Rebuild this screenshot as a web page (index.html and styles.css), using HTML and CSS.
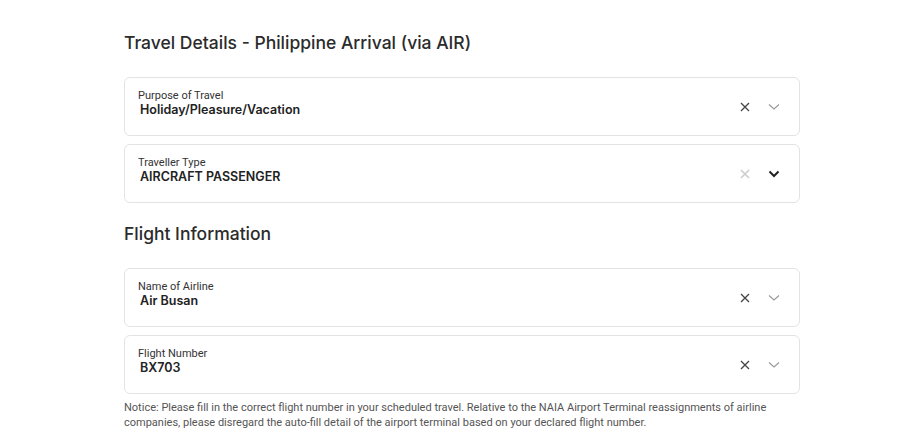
FILE: index.html
```html
<!DOCTYPE html>
<html lang="en">

<head>
    <meta charset="UTF-8">
    <meta name="viewport" content="width=device-width, initial-scale=1.0">
    <title>Travel Details</title>
    <link rel="stylesheet" href="styles.css">
</head>

<body>
    <div class="page">
        <h2 class="section-title">Travel Details - Philippine Arrival (via AIR)</h2>

        <div class="field">
            <div class="field-text">
                <div class="field-label">Purpose of Travel</div>
                <div class="field-value">Holiday/Pleasure/Vacation</div>
            </div>
            <div class="field-icons">
                <svg class="icon-clear" width="12" height="12" viewBox="0 0 12 12"><path d="M2 2 L10 10 M10 2 L2 10" stroke="#444" stroke-width="1.3" fill="none"/></svg>
                <svg class="icon-chevron" width="12" height="8" viewBox="0 0 12 8"><path d="M1 1.5 L6 6 L11 1.5" stroke="#999" stroke-width="1.1" fill="none"/></svg>
            </div>
        </div>

        <div class="field">
            <div class="field-text">
                <div class="field-label">Traveller Type</div>
                <div class="field-value">AIRCRAFT PASSENGER</div>
            </div>
            <div class="field-icons">
                <svg class="icon-clear" width="12" height="12" viewBox="0 0 12 12"><path d="M2 2 L10 10 M10 2 L2 10" stroke="#ccc" stroke-width="1.6" fill="none"/></svg>
                <svg class="icon-chevron" width="12" height="8" viewBox="0 0 12 8"><path d="M1.5 1.5 L6 6 L10.5 1.5" stroke="#222" stroke-width="2" fill="none"/></svg>
            </div>
        </div>

        <h2 class="section-title second">Flight Information</h2>

        <div class="field">
            <div class="field-text">
                <div class="field-label">Name of Airline</div>
                <div class="field-value">Air Busan</div>
            </div>
            <div class="field-icons">
                <svg class="icon-clear" width="12" height="12" viewBox="0 0 12 12"><path d="M2 2 L10 10 M10 2 L2 10" stroke="#444" stroke-width="1.3" fill="none"/></svg>
                <svg class="icon-chevron" width="12" height="8" viewBox="0 0 12 8"><path d="M1 1.5 L6 6 L11 1.5" stroke="#999" stroke-width="1.1" fill="none"/></svg>
            </div>
        </div>

        <div class="field">
            <div class="field-text">
                <div class="field-label">Flight Number</div>
                <div class="field-value">BX703</div>
            </div>
            <div class="field-icons">
                <svg class="icon-clear" width="12" height="12" viewBox="0 0 12 12"><path d="M2 2 L10 10 M10 2 L2 10" stroke="#444" stroke-width="1.3" fill="none"/></svg>
                <svg class="icon-chevron" width="12" height="8" viewBox="0 0 12 8"><path d="M1 1.5 L6 6 L11 1.5" stroke="#999" stroke-width="1.1" fill="none"/></svg>
            </div>
        </div>

        <p class="notice">Notice: Please fill in the correct flight number in your scheduled travel. Relative to the NAIA Airport Terminal reassignments of airline companies, please disregard the auto-fill detail of the airport terminal based on your declared flight number.</p>
    </div>
</body>

</html>
```

FILE: styles.css
```css
body {
    margin: 0;
    background: #fff;
    font-family: Roboto, "Liberation Sans", sans-serif;
    color: #222;
}

.page {
    width: 676px;
    margin-left: 124px;
    padding-top: 31px;
}

.section-title {
    font-family: Inter, "Open Sans", sans-serif;
    font-size: 17.5px;
    font-weight: 500;
    color: #2b2b2b;
    margin: 0 0 22px 0;
    line-height: 24px;
}

.section-title.second {
    margin-top: 19px;
}

.field {
    display: flex;
    align-items: center;
    height: 59px;
    box-sizing: border-box;
    border: 1px solid #e3e3e3;
    border-radius: 6px;
    padding: 0 19px 0 13px;
    margin-bottom: 8px;
}

.field:last-of-type {
    margin-bottom: 6px;
}

.field-text {
    flex: 1;
    padding-bottom: 6px;
}

.field-label {
    font-size: 11px;
    color: #333;
    line-height: 13px;
}

.field-value {
    font-family: Inter, "Open Sans", sans-serif;
    font-size: 12.5px;
    font-weight: 600;
    color: #222;
    margin-left: 2px;
    line-height: 16px;
}

.field-icons {
    display: flex;
    align-items: center;
    gap: 17px;
    padding-top: 1px;
}

.notice {
    font-size: 11px;
    color: #555;
    line-height: 15px;
    margin: 0;
}
```
